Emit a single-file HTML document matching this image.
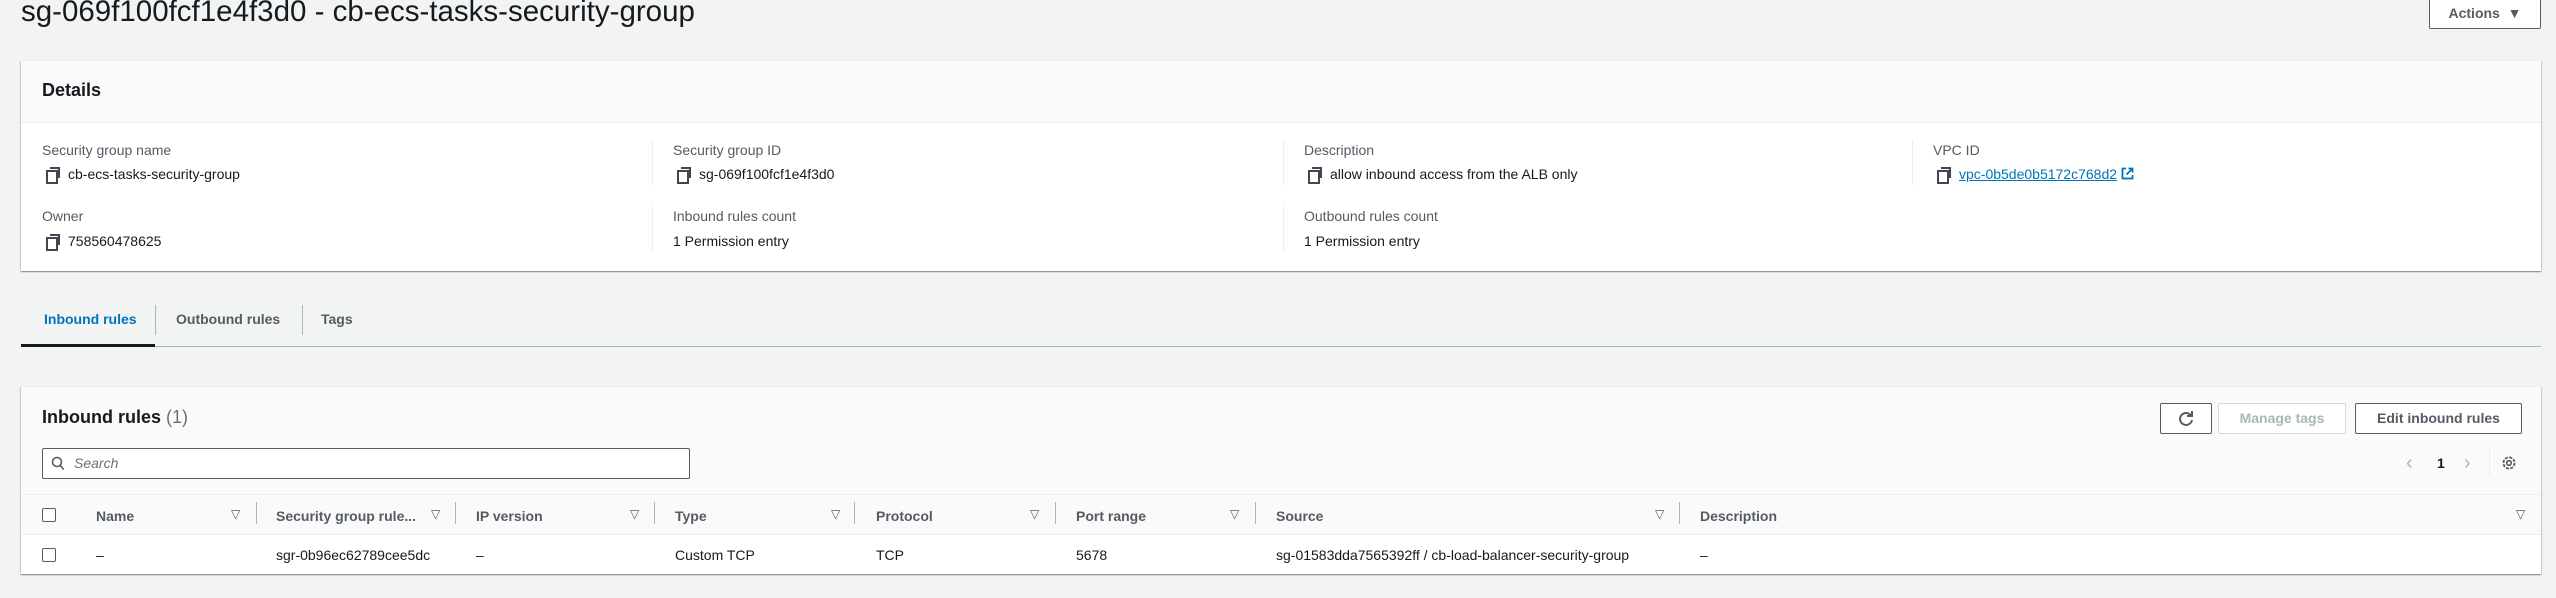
<!DOCTYPE html>
<html><head><meta charset="utf-8"><style>
*{box-sizing:border-box;margin:0;padding:0}
body{width:2556px;height:598px;background:#f2f3f3;font-family:"Liberation Sans",Arial,sans-serif;color:#16191f;position:relative;overflow:hidden;font-size:14px}
.a{position:absolute;white-space:nowrap}
.panel{position:absolute;background:#fff;box-shadow:0 1px 1px 0 rgba(0,28,36,.3),1px 1px 1px 0 rgba(0,28,36,.15),-1px 1px 1px 0 rgba(0,28,36,.15);border-top:1px solid #eaeded}
.lbl{color:#545b64}
.cp{display:inline-block;width:12px;height:13px;position:relative;vertical-align:-1px;margin-right:10px}
.cp:before{content:"";position:absolute;left:0;top:3px;width:8px;height:10px;border:2px solid #414750;background:#fff}
.cp:after{content:"";position:absolute;left:4px;top:0;width:8px;height:9px;border:2px solid #414750;border-left:none;border-bottom:none}
.vd{position:absolute;width:1px;background:#eaeded}
.btn{position:absolute;border:1px solid #545b64;background:#fff;font-weight:bold;color:#545b64;text-align:center;border-radius:2px;font-size:14px}
.th{position:absolute;top:508px;font-weight:bold;color:#545b64}
.fl{position:absolute;top:507px;color:#545b64;font-size:12px}
.sp{position:absolute;top:502px;width:1px;height:22px;background:#aab7b8}
.cb{position:absolute;width:14px;height:14px;border:1.5px solid #545b64;border-radius:2px;background:#fff}
</style></head><body>
<div class="a" style="left:21px;top:-5px;font-size:29.5px;color:#16191f">sg-069f100fcf1e4f3d0 - cb-ecs-tasks-security-group</div>
<div class="btn" style="left:2429px;top:-2px;width:112px;height:31px;line-height:29px;color:#545b64">Actions &nbsp;▼</div>

<div class="panel" style="left:21px;top:60px;width:2520px;height:211px">
 <div style="height:62px;background:#fafafa;border-bottom:1px solid #eaeded"></div>
</div>
<div class="a" style="left:42px;top:80px;font-size:18px;font-weight:bold">Details</div>
<div class="vd" style="left:652px;top:140px;height:45px"></div><div class="vd" style="left:652px;top:206px;height:45px"></div>
<div class="vd" style="left:1283px;top:140px;height:45px"></div><div class="vd" style="left:1283px;top:206px;height:45px"></div>
<div class="vd" style="left:1912px;top:140px;height:45px"></div>
<div class="a lbl" style="left:42px;top:142px">Security group name</div>
<div class="a" style="left:46px;top:166px"><span class="cp"></span>cb-ecs-tasks-security-group</div>
<div class="a lbl" style="left:42px;top:208px">Owner</div>
<div class="a" style="left:46px;top:233px"><span class="cp"></span>758560478625</div>
<div class="a lbl" style="left:673px;top:142px">Security group ID</div>
<div class="a" style="left:677px;top:166px"><span class="cp"></span>sg-069f100fcf1e4f3d0</div>
<div class="a lbl" style="left:673px;top:208px">Inbound rules count</div>
<div class="a" style="left:673px;top:233px">1 Permission entry</div>
<div class="a lbl" style="left:1304px;top:142px">Description</div>
<div class="a" style="left:1308px;top:166px"><span class="cp"></span>allow inbound access from the ALB only</div>
<div class="a lbl" style="left:1304px;top:208px">Outbound rules count</div>
<div class="a" style="left:1304px;top:233px">1 Permission entry</div>
<div class="a lbl" style="left:1933px;top:142px">VPC ID</div>
<div class="a" style="left:1937px;top:166px"><span class="cp"></span><span style="color:#0073bb;text-decoration:underline">vpc-0b5de0b5172c768d2</span> <svg width="13" height="13" viewBox="0 0 13 13" style="vertical-align:-1px"><path d="M5 1.5H1.5v10h10V8M7.5 1.5h4v4M11.5 1.5l-6 6" fill="none" stroke="#0073bb" stroke-width="1.8"/></svg></div>

<div class="a" style="left:21px;top:346px;width:2520px;height:1px;background:#aab7b8"></div>
<div class="a" style="left:21px;top:344px;width:134px;height:3px;background:#16191f"></div>
<div class="a" style="left:155px;top:305px;width:1px;height:30px;background:#aab7b8"></div>
<div class="a" style="left:302px;top:305px;width:1px;height:30px;background:#aab7b8"></div>
<div class="a" style="left:44px;top:311px;font-weight:bold;color:#0073bb">Inbound rules</div>
<div class="a" style="left:176px;top:311px;font-weight:bold;color:#545b64">Outbound rules</div>
<div class="a" style="left:321px;top:311px;font-weight:bold;color:#545b64">Tags</div>

<div class="panel" style="left:21px;top:386px;width:2520px;height:188px">
 <div style="height:108px;background:#fafafa;border-bottom:1px solid #eaeded"></div>
 <div style="height:40px;background:#fafafa;border-bottom:1px solid #eaeded"></div>
</div>
<div class="a" style="left:42px;top:407px;font-size:18px;font-weight:bold">Inbound rules <span style="font-weight:normal;color:#687078">(1)</span></div>
<div class="a" style="left:42px;top:448px;width:648px;height:31px;border:1px solid #545b64;border-radius:2px;background:#fff"></div>
<svg class="a" style="left:51px;top:456px" width="14" height="15" viewBox="0 0 14 15"><circle cx="6" cy="6" r="4.5" fill="none" stroke="#545b64" stroke-width="1.6"/><path d="M9.3 9.5l3.5 4" stroke="#545b64" stroke-width="1.6"/></svg>
<div class="a" style="left:74px;top:455px;font-style:italic;color:#687078">Search</div>
<div class="btn" style="left:2160px;top:403px;width:52px;height:31px"><svg width="20" height="20" viewBox="0 0 20 20" style="margin-top:5px"><path d="M15 6.5A6 6 0 1 0 16 11" fill="none" stroke="#545b64" stroke-width="2"/><path d="M16 2v5h-5" fill="none" stroke="#545b64" stroke-width="2"/></svg></div>
<div class="btn" style="left:2218px;top:403px;width:128px;height:31px;line-height:29px;border-color:#d5dbdb;color:#aab7b8">Manage tags</div>
<div class="btn" style="left:2355px;top:403px;width:167px;height:31px;line-height:29px">Edit inbound rules</div>
<div class="a" style="left:2406px;top:452px;color:#aab7b8;font-size:20px">‹</div>
<div class="a" style="left:2437px;top:455px;font-weight:bold">1</div>
<div class="a" style="left:2464px;top:452px;color:#aab7b8;font-size:20px">›</div>
<div class="a" style="left:2489px;top:448px;width:1px;height:28px;background:#eaeded"></div>
<svg class="a" style="left:2501px;top:455px" width="16" height="16" viewBox="0 0 16 16"><circle cx="8" cy="8" r="2.3" fill="none" stroke="#545b64" stroke-width="1.6"/><circle cx="8" cy="8" r="5.6" fill="none" stroke="#545b64" stroke-width="1.8" stroke-dasharray="3 1.4"/></svg>

<div class="cb" style="left:42px;top:508px"></div>
<div class="th" style="left:96px">Name</div><div class="fl" style="left:231px">▽</div><div class="sp" style="left:256px"></div>
<div class="th" style="left:276px">Security group rule...</div><div class="fl" style="left:431px">▽</div><div class="sp" style="left:455px"></div>
<div class="th" style="left:476px">IP version</div><div class="fl" style="left:630px">▽</div><div class="sp" style="left:654px"></div>
<div class="th" style="left:675px">Type</div><div class="fl" style="left:831px">▽</div><div class="sp" style="left:854px"></div>
<div class="th" style="left:876px">Protocol</div><div class="fl" style="left:1030px">▽</div><div class="sp" style="left:1055px"></div>
<div class="th" style="left:1076px">Port range</div><div class="fl" style="left:1230px">▽</div><div class="sp" style="left:1255px"></div>
<div class="th" style="left:1276px">Source</div><div class="fl" style="left:1655px">▽</div><div class="sp" style="left:1679px"></div>
<div class="th" style="left:1700px">Description</div><div class="fl" style="left:2516px">▽</div>

<div class="cb" style="left:42px;top:548px"></div>
<div class="a" style="left:96px;top:547px">–</div>
<div class="a" style="left:276px;top:547px">sgr-0b96ec62789cee5dc</div>
<div class="a" style="left:476px;top:547px">–</div>
<div class="a" style="left:675px;top:547px">Custom TCP</div>
<div class="a" style="left:876px;top:547px">TCP</div>
<div class="a" style="left:1076px;top:547px">5678</div>
<div class="a" style="left:1276px;top:547px">sg-01583dda7565392ff / cb-load-balancer-security-group</div>
<div class="a" style="left:1700px;top:547px">–</div>
</body></html>
